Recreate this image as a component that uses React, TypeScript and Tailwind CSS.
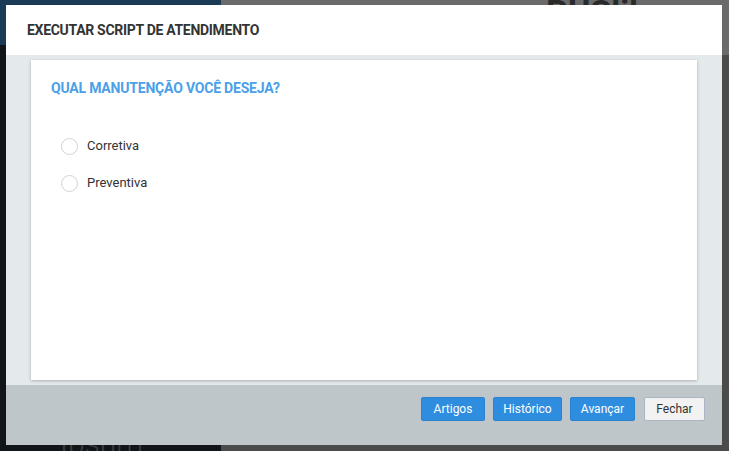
import React from "react";

function Radio({ label }: { label: string }) {
  return (
    <label className="flex items-center h-[20px]">
      <span className="w-[17px] h-[17px] rounded-full border border-[#cfd3d6] bg-white shrink-0" />
      <span className="ml-[9px] text-[13px] text-[#333333]">{label}</span>
    </label>
  );
}

export default function App() {
  return (
    <div
      className="relative w-[729px] h-[451px] overflow-hidden bg-[#4b4b4b]"
      style={{ fontFamily: "Roboto, 'Liberation Sans', sans-serif" }}
    >
      {/* backdrop page */}
      <div className="flex h-full">
        <div className="w-[221px] flex flex-col bg-[#111518]">
          <div className="h-[45px] bg-[#1b3a56]" />
          <div className="flex-1 flex items-end pl-[60px]">
            <span className="text-[30px] leading-[14px] text-[#3a3d40] font-light">Ipsum</span>
          </div>
        </div>
        <div className="flex-1 flex flex-col">
          <div className="h-[55px] bg-[#6a6a6a] flex items-start">
            <span className="ml-[325px] mt-[-8px] text-[34px] leading-[40px] font-bold text-[#2a2a2a]">PUSlibra</span>
          </div>
          <div className="flex-1 bg-[#4b4b4b]" />
        </div>
      </div>

      {/* modal */}
      <div className="absolute left-[6px] top-[5px] w-[716px] h-[440px] flex flex-col">
        <div className="h-[50px] bg-white flex items-center pl-[21px]">
          <h1 className="text-[14px] font-bold text-[#333333] tracking-[-0.3px]">
            EXECUTAR SCRIPT DE ATENDIMENTO
          </h1>
        </div>
        <div className="h-[330px] bg-[#e4e9ec] px-[25px] py-[5px]">
          <div className="h-full bg-white shadow-[0_1px_3px_rgba(0,0,0,0.25)] pt-[20px] pl-[20px]">
            <h2 className="text-[14px] font-bold text-[#4ba0e8] leading-[16px] tracking-[-0.2px]">
              QUAL MANUTENÇÃO VOCÊ DESEJA?
            </h2>
            <div className="mt-[40px] pl-[10px] flex flex-col gap-[17px]">
              <Radio label="Corretiva" />
              <Radio label="Preventiva" />
            </div>
          </div>
        </div>
        <div className="flex-1 bg-[#bfc6c9] flex items-start justify-end pt-[12px] pr-[17px]">
          <div className="flex gap-[8px]">
            <button className="h-[24px] w-[64px] rounded-[2px] bg-[#2f8de0] border border-[#2a82cf] text-white text-[12px]">
              Artigos
            </button>
            <button className="h-[24px] w-[69px] rounded-[2px] bg-[#2f8de0] border border-[#2a82cf] text-white text-[12px]">
              Histórico
            </button>
            <button className="h-[24px] w-[65px] rounded-[2px] bg-[#2f8de0] border border-[#2a82cf] text-white text-[12px]">
              Avançar
            </button>
            <button className="ml-[1px] h-[24px] w-[61px] rounded-[2px] bg-[#f2f2f2] border border-[#a9b6c2] text-[#333333] text-[12px]">
              Fechar
            </button>
          </div>
        </div>
      </div>
    </div>
  );
}
